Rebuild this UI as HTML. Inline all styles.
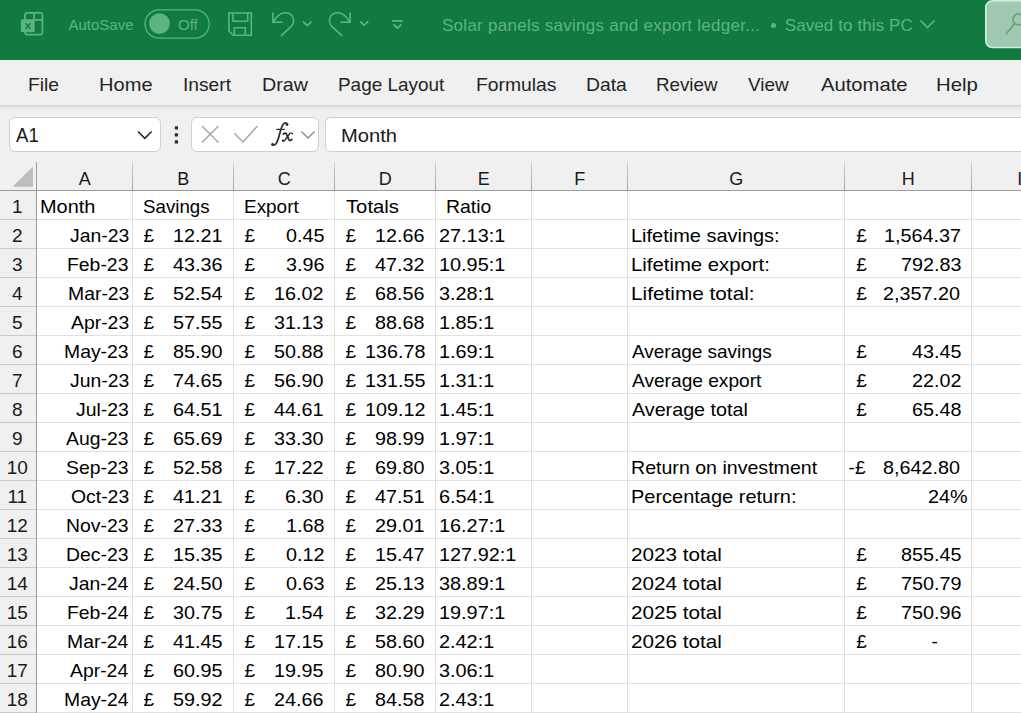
<!DOCTYPE html>
<html><head><meta charset="utf-8"><style>
*{box-sizing:border-box}
html,body{margin:0;padding:0;width:1021px;height:713px;overflow:hidden;background:#f0f0f0;font-family:"Liberation Sans",sans-serif}
.t{position:absolute;white-space:pre;line-height:1}
.g{position:absolute;background:#e1e1e1}
</style></head><body>

<div style="position:absolute;left:0;top:0;width:1021px;height:60px;background:#117a41"></div>
<svg style="position:absolute;left:0;top:0" width="440" height="60" viewBox="0 0 440 60">
<g fill="none" stroke="#5cb580" stroke-width="1.7">
<rect x="25.1" y="12.8" width="17.3" height="21.8" rx="2.2"/>
<line x1="34" y1="13" x2="34" y2="20"/>
<line x1="34" y1="19.9" x2="42.4" y2="19.9"/>
</g>
<rect x="20.9" y="19.3" width="13.8" height="13" rx="2" fill="#5cb580"/>
<path d="M25.5 23.3 L30.4 29 M30.4 23.3 L25.5 29" stroke="#117a41" stroke-width="1.4" fill="none"/>
<rect x="145" y="9.8" width="64.2" height="28.4" rx="14.2" fill="none" stroke="#5cb580" stroke-width="1.2"/>
<circle cx="159.5" cy="23.6" r="10.4" fill="#5cb580"/>
<g fill="none" stroke="#5cb580" stroke-width="1.6" stroke-linejoin="miter">
<path d="M228.9 13 H251.3 V35.3 H233.2 L228.9 31 Z"/>
<path d="M233 13 V21.3 H247.7 V13"/>
<path d="M234.4 35.2 V27.7 H245.3 V35.2"/>
<path d="M272.9 12.6 V22.2 H282.6"/>
<path d="M273.2 22 C276.5 16.2 281 12.8 285.8 12.8 C290.2 12.8 293.6 16.2 293.6 20.4 C293.6 23 292.6 25 291 26.6 L281 35.8"/>
<path d="M303 21.6 L307.2 25.6 L311.4 21.6" stroke-width="1.7"/>
<path d="M350.1 12.6 V22.2 H340.4"/>
<path d="M349.8 22 C346.5 16.2 342 12.8 337.2 12.8 C332.8 12.8 329.4 16.2 329.4 20.4 C329.4 23 330.4 25 332 26.6 L342.2 35.8"/>
<path d="M360.2 21.4 L364.2 25.4 L368.2 21.4" stroke-width="1.7"/>
<path d="M392 20.9 H402.7" stroke-width="1.8"/>
<path d="M393.5 24.4 L397.4 28.2 L401.3 24.4" stroke-width="1.8"/>
</g>
</svg>
<div class="t" style="left:68.5px;top:17.00px;font-size:15px;color:#5cb580">AutoSave</div>
<div class="t" style="left:178px;top:17.20px;font-size:15px;color:#5cb580">Off</div>
<div class="t" style="left:442px;top:17.21px;font-size:17px;letter-spacing:0.27px;color:#5cb580">Solar panels savings and export ledger...</div>
<div style="position:absolute;left:770.5px;top:22.5px;width:5px;height:5px;border-radius:50%;background:#5cb580"></div>
<div class="t" style="left:784.7px;top:17.21px;font-size:17px;letter-spacing:0.1px;color:#5cb580">Saved to this PC</div>
<svg style="position:absolute;left:900px;top:0" width="121" height="60" viewBox="900 0 121 60">
<path d="M920.5 20.5 L927.5 27.5 L934.5 20.5" fill="none" stroke="#5cb580" stroke-width="1.6"/>
<rect x="985.8" y="0.9" width="60" height="46.6" rx="6.5" fill="#a0c7af" stroke="#c8eed5" stroke-width="1.6"/>
<circle cx="1018.5" cy="19.5" r="5.6" fill="none" stroke="#5fa97f" stroke-width="1.8"/>
<path d="M1014.3 23.8 L1006 34.2" stroke="#5fa97f" stroke-width="1.8" fill="none"/>
</svg>
<div style="position:absolute;left:0;top:60px;width:1021px;height:45px;background:#f0f0f0"></div>
<div style="position:absolute;left:0;top:105px;width:1021px;height:6px;background:linear-gradient(#d2d2d2,#e6e6e6 40%,#eeeeee)"></div>
<div class="t" style="left:27.59px;top:74.82px;font-size:19px;color:#242424;transform:scaleX(1.0103);transform-origin:0 0">File</div>
<div class="t" style="left:98.64px;top:74.82px;font-size:19px;color:#242424;transform:scaleX(1.0571);transform-origin:0 0">Home</div>
<div class="t" style="left:182.68px;top:74.82px;font-size:19px;color:#242424;transform:scaleX(1.0109);transform-origin:0 0">Insert</div>
<div class="t" style="left:262.47px;top:74.82px;font-size:19px;color:#242424;transform:scaleX(1.0349);transform-origin:0 0">Draw</div>
<div class="t" style="left:338.00px;top:74.82px;font-size:19px;color:#242424;transform:scaleX(0.9962);transform-origin:0 0">Page Layout</div>
<div class="t" style="left:476.48px;top:74.82px;font-size:19px;color:#242424;transform:scaleX(1.0167);transform-origin:0 0">Formulas</div>
<div class="t" style="left:585.98px;top:74.82px;font-size:19px;color:#242424;transform:scaleX(1.0154);transform-origin:0 0">Data</div>
<div class="t" style="left:656.31px;top:74.82px;font-size:19px;color:#242424;transform:scaleX(0.9869);transform-origin:0 0">Review</div>
<div class="t" style="left:748.20px;top:74.82px;font-size:19px;color:#242424;transform:scaleX(0.9951);transform-origin:0 0">View</div>
<div class="t" style="left:820.70px;top:74.82px;font-size:19px;color:#242424;transform:scaleX(1.0642);transform-origin:0 0">Automate</div>
<div class="t" style="left:936.43px;top:74.82px;font-size:19px;color:#242424;transform:scaleX(1.0730);transform-origin:0 0">Help</div>
<div style="position:absolute;left:9px;top:117px;width:152px;height:35px;background:#fff;border:1px solid #cfcfcf;border-radius:6px"></div>
<div class="t" style="left:15.8px;top:125.37px;font-size:20px;color:#1a1a1a;transform:scaleX(0.93);transform-origin:0 0">A1</div>
<svg style="position:absolute;left:0;top:110px" width="330" height="50" viewBox="0 110 330 50">
<path d="M138 131.5 L144.8 138.3 L151.6 131.5" fill="none" stroke="#2a2a2a" stroke-width="1.6"/>
<rect x="174.8" y="126.3" width="3.2" height="3.2" fill="#2a2a2a"/>
<rect x="174.8" y="133.3" width="3.2" height="3.2" fill="#2a2a2a"/>
<rect x="174.8" y="140.3" width="3.2" height="3.2" fill="#2a2a2a"/>
</svg>
<div style="position:absolute;left:191px;top:117px;width:128px;height:35px;background:#fff;border:1px solid #cfcfcf;border-radius:6px"></div>
<div style="position:absolute;left:325px;top:117px;width:720px;height:35px;background:#fff;border:1px solid #cfcfcf;border-radius:6px"></div>
<svg style="position:absolute;left:180px;top:110px" width="150" height="50" viewBox="180 110 150 50">
<path d="M202 126 L218.5 142.5 M218.5 126 L202 142.5" stroke="#a6a6a6" stroke-width="1.5" fill="none"/>
<path d="M234.5 133.5 L243 142 L257.5 126" stroke="#a6a6a6" stroke-width="1.5" fill="none"/>
<path d="M301.5 131.5 L308 138 L314.5 131.5" stroke="#8a8a8a" stroke-width="1.4" fill="none"/>
</svg>
<svg style="position:absolute;left:260px;top:115px" width="40" height="40" viewBox="260 115 40 40">
<g fill="none" stroke="#2e2e2e" stroke-linecap="round">
<path d="M287.3 124.6 C287 122.6 284.6 122.4 283.2 124.2 C281.6 126.2 280.6 130 279.6 134 C278.6 138 277.8 141.6 276 143.8 C274.8 145.3 273.2 145.5 272.3 144.6" stroke-width="1.8"/>
<path d="M276.8 129.4 H284.2" stroke-width="1.4"/>
<path d="M283.4 134 C284.6 132.8 286 132.9 286.7 134.6 L288.8 139.6 C289.4 140.9 290.7 140.7 291.8 139.4" stroke-width="1.8"/>
<path d="M292.5 133.8 C291.5 132.8 290.3 133 289.5 134 L285 140 C284.2 141 283.3 141.3 282.6 140.8" stroke-width="1.3"/>
</g>
<circle cx="287" cy="124.6" r="1.4" fill="#2e2e2e"/>
<circle cx="272.6" cy="144.4" r="1.4" fill="#2e2e2e"/>
<circle cx="282.9" cy="140.7" r="1.1" fill="#2e2e2e"/>
</svg>
<div class="t" style="left:340.6px;top:126.32px;font-size:19px;color:#1a1a1a;transform:scaleX(1.06);transform-origin:0 0">Month</div>
<div style="position:absolute;left:37px;top:191px;width:984px;height:522px;background:#fff"></div>
<div style="position:absolute;left:0;top:162px;width:1021px;height:28px;background:#f0f0f0"></div>
<div style="position:absolute;left:0;top:190px;width:36px;height:523px;background:#f0f0f0"></div>
<div class="g" style="left:37px;top:219px;width:984px;height:1px"></div>
<div style="position:absolute;left:0;top:219px;width:36px;height:1px;background:#c8c8c8"></div>
<div class="g" style="left:37px;top:248px;width:984px;height:1px"></div>
<div style="position:absolute;left:0;top:248px;width:36px;height:1px;background:#c8c8c8"></div>
<div class="g" style="left:37px;top:277px;width:984px;height:1px"></div>
<div style="position:absolute;left:0;top:277px;width:36px;height:1px;background:#c8c8c8"></div>
<div class="g" style="left:37px;top:306px;width:984px;height:1px"></div>
<div style="position:absolute;left:0;top:306px;width:36px;height:1px;background:#c8c8c8"></div>
<div class="g" style="left:37px;top:335px;width:984px;height:1px"></div>
<div style="position:absolute;left:0;top:335px;width:36px;height:1px;background:#c8c8c8"></div>
<div class="g" style="left:37px;top:364px;width:984px;height:1px"></div>
<div style="position:absolute;left:0;top:364px;width:36px;height:1px;background:#c8c8c8"></div>
<div class="g" style="left:37px;top:393px;width:984px;height:1px"></div>
<div style="position:absolute;left:0;top:393px;width:36px;height:1px;background:#c8c8c8"></div>
<div class="g" style="left:37px;top:422px;width:984px;height:1px"></div>
<div style="position:absolute;left:0;top:422px;width:36px;height:1px;background:#c8c8c8"></div>
<div class="g" style="left:37px;top:451px;width:984px;height:1px"></div>
<div style="position:absolute;left:0;top:451px;width:36px;height:1px;background:#c8c8c8"></div>
<div class="g" style="left:37px;top:480px;width:984px;height:1px"></div>
<div style="position:absolute;left:0;top:480px;width:36px;height:1px;background:#c8c8c8"></div>
<div class="g" style="left:37px;top:509px;width:984px;height:1px"></div>
<div style="position:absolute;left:0;top:509px;width:36px;height:1px;background:#c8c8c8"></div>
<div class="g" style="left:37px;top:538px;width:984px;height:1px"></div>
<div style="position:absolute;left:0;top:538px;width:36px;height:1px;background:#c8c8c8"></div>
<div class="g" style="left:37px;top:567px;width:984px;height:1px"></div>
<div style="position:absolute;left:0;top:567px;width:36px;height:1px;background:#c8c8c8"></div>
<div class="g" style="left:37px;top:596px;width:984px;height:1px"></div>
<div style="position:absolute;left:0;top:596px;width:36px;height:1px;background:#c8c8c8"></div>
<div class="g" style="left:37px;top:625px;width:984px;height:1px"></div>
<div style="position:absolute;left:0;top:625px;width:36px;height:1px;background:#c8c8c8"></div>
<div class="g" style="left:37px;top:654px;width:984px;height:1px"></div>
<div style="position:absolute;left:0;top:654px;width:36px;height:1px;background:#c8c8c8"></div>
<div class="g" style="left:37px;top:683px;width:984px;height:1px"></div>
<div style="position:absolute;left:0;top:683px;width:36px;height:1px;background:#c8c8c8"></div>
<div class="g" style="left:37px;top:712px;width:984px;height:1px"></div>
<div style="position:absolute;left:0;top:712px;width:36px;height:1px;background:#c8c8c8"></div>
<div class="g" style="left:132px;top:191px;width:1px;height:522px"></div>
<div style="position:absolute;left:132px;top:162px;width:1px;height:28px;background:linear-gradient(#d4d4d4,#b4b4b4 60%,#a8a8a8)"></div>
<div class="g" style="left:233px;top:191px;width:1px;height:522px"></div>
<div style="position:absolute;left:233px;top:162px;width:1px;height:28px;background:linear-gradient(#d4d4d4,#b4b4b4 60%,#a8a8a8)"></div>
<div class="g" style="left:334px;top:191px;width:1px;height:522px"></div>
<div style="position:absolute;left:334px;top:162px;width:1px;height:28px;background:linear-gradient(#d4d4d4,#b4b4b4 60%,#a8a8a8)"></div>
<div class="g" style="left:435px;top:191px;width:1px;height:522px"></div>
<div style="position:absolute;left:435px;top:162px;width:1px;height:28px;background:linear-gradient(#d4d4d4,#b4b4b4 60%,#a8a8a8)"></div>
<div class="g" style="left:531px;top:191px;width:1px;height:522px"></div>
<div style="position:absolute;left:531px;top:162px;width:1px;height:28px;background:linear-gradient(#d4d4d4,#b4b4b4 60%,#a8a8a8)"></div>
<div class="g" style="left:627px;top:191px;width:1px;height:522px"></div>
<div style="position:absolute;left:627px;top:162px;width:1px;height:28px;background:linear-gradient(#d4d4d4,#b4b4b4 60%,#a8a8a8)"></div>
<div class="g" style="left:844px;top:191px;width:1px;height:522px"></div>
<div style="position:absolute;left:844px;top:162px;width:1px;height:28px;background:linear-gradient(#d4d4d4,#b4b4b4 60%,#a8a8a8)"></div>
<div class="g" style="left:971px;top:191px;width:1px;height:522px"></div>
<div style="position:absolute;left:971px;top:162px;width:1px;height:28px;background:linear-gradient(#d4d4d4,#b4b4b4 60%,#a8a8a8)"></div>
<div style="position:absolute;left:0;top:190px;width:1021px;height:1px;background:#9c9c9c"></div>
<div style="position:absolute;left:36px;top:162px;width:1px;height:551px;background:#9c9c9c"></div>
<svg style="position:absolute;left:0;top:160px" width="36" height="30" viewBox="0 160 36 30"><path d="M33 166.5 V186.8 H12.6 Z" fill="#bdbdbd"/></svg>
<div class="t" style="left:36.8px;width:96px;text-align:center;top:169.66px;font-size:18px;color:#1a1a1a">A</div>
<div class="t" style="left:132.8px;width:101px;text-align:center;top:169.66px;font-size:18px;color:#1a1a1a">B</div>
<div class="t" style="left:233.8px;width:101px;text-align:center;top:169.66px;font-size:18px;color:#1a1a1a">C</div>
<div class="t" style="left:334.8px;width:101px;text-align:center;top:169.66px;font-size:18px;color:#1a1a1a">D</div>
<div class="t" style="left:435.8px;width:96px;text-align:center;top:169.66px;font-size:18px;color:#1a1a1a">E</div>
<div class="t" style="left:531.8px;width:96px;text-align:center;top:169.66px;font-size:18px;color:#1a1a1a">F</div>
<div class="t" style="left:627.8px;width:217px;text-align:center;top:169.66px;font-size:18px;color:#1a1a1a">G</div>
<div class="t" style="left:844.8px;width:127px;text-align:center;top:169.66px;font-size:18px;color:#1a1a1a">H</div>
<div class="t" style="left:1017.2px;top:169.66px;font-size:18px;color:#1a1a1a">I</div>
<div class="t" style="left:-0.7px;width:36px;text-align:center;top:196.92px;font-size:19px;color:#1a1a1a">1</div>
<div class="t" style="left:-0.7px;width:36px;text-align:center;top:225.92px;font-size:19px;color:#1a1a1a">2</div>
<div class="t" style="left:-0.7px;width:36px;text-align:center;top:254.92px;font-size:19px;color:#1a1a1a">3</div>
<div class="t" style="left:-0.7px;width:36px;text-align:center;top:283.92px;font-size:19px;color:#1a1a1a">4</div>
<div class="t" style="left:-0.7px;width:36px;text-align:center;top:312.92px;font-size:19px;color:#1a1a1a">5</div>
<div class="t" style="left:-0.7px;width:36px;text-align:center;top:341.92px;font-size:19px;color:#1a1a1a">6</div>
<div class="t" style="left:-0.7px;width:36px;text-align:center;top:370.92px;font-size:19px;color:#1a1a1a">7</div>
<div class="t" style="left:-0.7px;width:36px;text-align:center;top:399.92px;font-size:19px;color:#1a1a1a">8</div>
<div class="t" style="left:-0.7px;width:36px;text-align:center;top:428.92px;font-size:19px;color:#1a1a1a">9</div>
<div class="t" style="left:-0.7px;width:36px;text-align:center;top:457.92px;font-size:19px;color:#1a1a1a">10</div>
<div class="t" style="left:-0.7px;width:36px;text-align:center;top:486.92px;font-size:19px;color:#1a1a1a">11</div>
<div class="t" style="left:-0.7px;width:36px;text-align:center;top:515.92px;font-size:19px;color:#1a1a1a">12</div>
<div class="t" style="left:-0.7px;width:36px;text-align:center;top:544.92px;font-size:19px;color:#1a1a1a">13</div>
<div class="t" style="left:-0.7px;width:36px;text-align:center;top:573.92px;font-size:19px;color:#1a1a1a">14</div>
<div class="t" style="left:-0.7px;width:36px;text-align:center;top:602.92px;font-size:19px;color:#1a1a1a">15</div>
<div class="t" style="left:-0.7px;width:36px;text-align:center;top:631.92px;font-size:19px;color:#1a1a1a">16</div>
<div class="t" style="left:-0.7px;width:36px;text-align:center;top:660.92px;font-size:19px;color:#1a1a1a">17</div>
<div class="t" style="left:-0.7px;width:36px;text-align:center;top:689.92px;font-size:19px;color:#1a1a1a">18</div>
<div class="t" style="left:40.25px;top:197.42px;font-size:19px;color:#000;transform:scaleX(1.0490);transform-origin:0 0">Month</div>
<div class="t" style="left:142.82px;top:197.42px;font-size:19px;color:#000;transform:scaleX(0.9848);transform-origin:0 0">Savings</div>
<div class="t" style="left:244.20px;top:197.42px;font-size:19px;color:#000;transform:scaleX(0.9963);transform-origin:0 0">Export</div>
<div class="t" style="left:346.10px;top:197.42px;font-size:19px;color:#000;transform:scaleX(1.0653);transform-origin:0 0">Totals</div>
<div class="t" style="left:446.18px;top:197.42px;font-size:19px;color:#000;transform:scaleX(1.0209);transform-origin:0 0">Ratio</div>
<div class="t" style="left:70.26px;top:226.42px;font-size:19px;color:#000;transform:scaleX(1.0200);transform-origin:0 0">Jan-23</div>
<div class="t" style="left:143.60px;top:226.42px;font-size:19px;color:#000;transform:scaleX(1.0000);transform-origin:0 0">£</div>
<div class="t" style="left:173.22px;top:226.42px;font-size:19px;color:#000;transform:scaleX(1.0400);transform-origin:0 0">12.21</div>
<div class="t" style="left:244.60px;top:226.42px;font-size:19px;color:#000;transform:scaleX(1.0000);transform-origin:0 0">£</div>
<div class="t" style="left:285.66px;top:226.42px;font-size:19px;color:#000;transform:scaleX(1.0400);transform-origin:0 0">0.45</div>
<div class="t" style="left:345.60px;top:226.42px;font-size:19px;color:#000;transform:scaleX(1.0000);transform-origin:0 0">£</div>
<div class="t" style="left:375.22px;top:226.42px;font-size:19px;color:#000;transform:scaleX(1.0400);transform-origin:0 0">12.66</div>
<div class="t" style="left:438.85px;top:226.42px;font-size:19px;color:#000;transform:scaleX(1.0450);transform-origin:0 0">27.13:1</div>
<div class="t" style="left:630.95px;top:226.42px;font-size:19px;color:#000;transform:scaleX(1.0504);transform-origin:0 0">Lifetime savings:</div>
<div class="t" style="left:856.20px;top:226.42px;font-size:19px;color:#000;transform:scaleX(1.0000);transform-origin:0 0">£</div>
<div class="t" style="left:884.48px;top:226.42px;font-size:19px;color:#000;transform:scaleX(1.0400);transform-origin:0 0">1,564.37</div>
<div class="t" style="left:67.20px;top:255.42px;font-size:19px;color:#000;transform:scaleX(1.0200);transform-origin:0 0">Feb-23</div>
<div class="t" style="left:143.60px;top:255.42px;font-size:19px;color:#000;transform:scaleX(1.0000);transform-origin:0 0">£</div>
<div class="t" style="left:173.22px;top:255.42px;font-size:19px;color:#000;transform:scaleX(1.0400);transform-origin:0 0">43.36</div>
<div class="t" style="left:244.60px;top:255.42px;font-size:19px;color:#000;transform:scaleX(1.0000);transform-origin:0 0">£</div>
<div class="t" style="left:285.66px;top:255.42px;font-size:19px;color:#000;transform:scaleX(1.0400);transform-origin:0 0">3.96</div>
<div class="t" style="left:345.60px;top:255.42px;font-size:19px;color:#000;transform:scaleX(1.0000);transform-origin:0 0">£</div>
<div class="t" style="left:375.22px;top:255.42px;font-size:19px;color:#000;transform:scaleX(1.0400);transform-origin:0 0">47.32</div>
<div class="t" style="left:438.85px;top:255.42px;font-size:19px;color:#000;transform:scaleX(1.0450);transform-origin:0 0">10.95:1</div>
<div class="t" style="left:630.93px;top:255.42px;font-size:19px;color:#000;transform:scaleX(1.0693);transform-origin:0 0">Lifetime export:</div>
<div class="t" style="left:856.20px;top:255.42px;font-size:19px;color:#000;transform:scaleX(1.0000);transform-origin:0 0">£</div>
<div class="t" style="left:901.12px;top:255.42px;font-size:19px;color:#000;transform:scaleX(1.0400);transform-origin:0 0">792.83</div>
<div class="t" style="left:68.22px;top:284.42px;font-size:19px;color:#000;transform:scaleX(1.0200);transform-origin:0 0">Mar-23</div>
<div class="t" style="left:143.60px;top:284.42px;font-size:19px;color:#000;transform:scaleX(1.0000);transform-origin:0 0">£</div>
<div class="t" style="left:173.22px;top:284.42px;font-size:19px;color:#000;transform:scaleX(1.0400);transform-origin:0 0">52.54</div>
<div class="t" style="left:244.60px;top:284.42px;font-size:19px;color:#000;transform:scaleX(1.0000);transform-origin:0 0">£</div>
<div class="t" style="left:274.22px;top:284.42px;font-size:19px;color:#000;transform:scaleX(1.0400);transform-origin:0 0">16.02</div>
<div class="t" style="left:345.60px;top:284.42px;font-size:19px;color:#000;transform:scaleX(1.0000);transform-origin:0 0">£</div>
<div class="t" style="left:375.22px;top:284.42px;font-size:19px;color:#000;transform:scaleX(1.0400);transform-origin:0 0">68.56</div>
<div class="t" style="left:438.85px;top:284.42px;font-size:19px;color:#000;transform:scaleX(1.0450);transform-origin:0 0">3.28:1</div>
<div class="t" style="left:630.91px;top:284.42px;font-size:19px;color:#000;transform:scaleX(1.0937);transform-origin:0 0">Lifetime total:</div>
<div class="t" style="left:856.20px;top:284.42px;font-size:19px;color:#000;transform:scaleX(1.0000);transform-origin:0 0">£</div>
<div class="t" style="left:883.44px;top:284.42px;font-size:19px;color:#000;transform:scaleX(1.0400);transform-origin:0 0">2,357.20</div>
<div class="t" style="left:71.28px;top:313.42px;font-size:19px;color:#000;transform:scaleX(1.0200);transform-origin:0 0">Apr-23</div>
<div class="t" style="left:143.60px;top:313.42px;font-size:19px;color:#000;transform:scaleX(1.0000);transform-origin:0 0">£</div>
<div class="t" style="left:173.22px;top:313.42px;font-size:19px;color:#000;transform:scaleX(1.0400);transform-origin:0 0">57.55</div>
<div class="t" style="left:244.60px;top:313.42px;font-size:19px;color:#000;transform:scaleX(1.0000);transform-origin:0 0">£</div>
<div class="t" style="left:274.22px;top:313.42px;font-size:19px;color:#000;transform:scaleX(1.0400);transform-origin:0 0">31.13</div>
<div class="t" style="left:345.60px;top:313.42px;font-size:19px;color:#000;transform:scaleX(1.0000);transform-origin:0 0">£</div>
<div class="t" style="left:375.22px;top:313.42px;font-size:19px;color:#000;transform:scaleX(1.0400);transform-origin:0 0">88.68</div>
<div class="t" style="left:438.85px;top:313.42px;font-size:19px;color:#000;transform:scaleX(1.0450);transform-origin:0 0">1.85:1</div>
<div class="t" style="left:64.14px;top:342.42px;font-size:19px;color:#000;transform:scaleX(1.0200);transform-origin:0 0">May-23</div>
<div class="t" style="left:143.60px;top:342.42px;font-size:19px;color:#000;transform:scaleX(1.0000);transform-origin:0 0">£</div>
<div class="t" style="left:173.22px;top:342.42px;font-size:19px;color:#000;transform:scaleX(1.0400);transform-origin:0 0">85.90</div>
<div class="t" style="left:244.60px;top:342.42px;font-size:19px;color:#000;transform:scaleX(1.0000);transform-origin:0 0">£</div>
<div class="t" style="left:274.22px;top:342.42px;font-size:19px;color:#000;transform:scaleX(1.0400);transform-origin:0 0">50.88</div>
<div class="t" style="left:345.60px;top:342.42px;font-size:19px;color:#000;transform:scaleX(1.0000);transform-origin:0 0">£</div>
<div class="t" style="left:364.82px;top:342.42px;font-size:19px;color:#000;transform:scaleX(1.0400);transform-origin:0 0">136.78</div>
<div class="t" style="left:438.85px;top:342.42px;font-size:19px;color:#000;transform:scaleX(1.0450);transform-origin:0 0">1.69:1</div>
<div class="t" style="left:632.00px;top:342.42px;font-size:19px;color:#000;transform:scaleX(0.9979);transform-origin:0 0">Average savings</div>
<div class="t" style="left:856.20px;top:342.42px;font-size:19px;color:#000;transform:scaleX(1.0000);transform-origin:0 0">£</div>
<div class="t" style="left:911.52px;top:342.42px;font-size:19px;color:#000;transform:scaleX(1.0400);transform-origin:0 0">43.45</div>
<div class="t" style="left:70.26px;top:371.42px;font-size:19px;color:#000;transform:scaleX(1.0200);transform-origin:0 0">Jun-23</div>
<div class="t" style="left:143.60px;top:371.42px;font-size:19px;color:#000;transform:scaleX(1.0000);transform-origin:0 0">£</div>
<div class="t" style="left:173.22px;top:371.42px;font-size:19px;color:#000;transform:scaleX(1.0400);transform-origin:0 0">74.65</div>
<div class="t" style="left:244.60px;top:371.42px;font-size:19px;color:#000;transform:scaleX(1.0000);transform-origin:0 0">£</div>
<div class="t" style="left:274.22px;top:371.42px;font-size:19px;color:#000;transform:scaleX(1.0400);transform-origin:0 0">56.90</div>
<div class="t" style="left:345.60px;top:371.42px;font-size:19px;color:#000;transform:scaleX(1.0000);transform-origin:0 0">£</div>
<div class="t" style="left:364.82px;top:371.42px;font-size:19px;color:#000;transform:scaleX(1.0400);transform-origin:0 0">131.55</div>
<div class="t" style="left:438.85px;top:371.42px;font-size:19px;color:#000;transform:scaleX(1.0450);transform-origin:0 0">1.31:1</div>
<div class="t" style="left:632.00px;top:371.42px;font-size:19px;color:#000;transform:scaleX(1.0070);transform-origin:0 0">Average export</div>
<div class="t" style="left:856.20px;top:371.42px;font-size:19px;color:#000;transform:scaleX(1.0000);transform-origin:0 0">£</div>
<div class="t" style="left:911.52px;top:371.42px;font-size:19px;color:#000;transform:scaleX(1.0400);transform-origin:0 0">22.02</div>
<div class="t" style="left:76.38px;top:400.42px;font-size:19px;color:#000;transform:scaleX(1.0200);transform-origin:0 0">Jul-23</div>
<div class="t" style="left:143.60px;top:400.42px;font-size:19px;color:#000;transform:scaleX(1.0000);transform-origin:0 0">£</div>
<div class="t" style="left:173.22px;top:400.42px;font-size:19px;color:#000;transform:scaleX(1.0400);transform-origin:0 0">64.51</div>
<div class="t" style="left:244.60px;top:400.42px;font-size:19px;color:#000;transform:scaleX(1.0000);transform-origin:0 0">£</div>
<div class="t" style="left:274.22px;top:400.42px;font-size:19px;color:#000;transform:scaleX(1.0400);transform-origin:0 0">44.61</div>
<div class="t" style="left:345.60px;top:400.42px;font-size:19px;color:#000;transform:scaleX(1.0000);transform-origin:0 0">£</div>
<div class="t" style="left:364.82px;top:400.42px;font-size:19px;color:#000;transform:scaleX(1.0400);transform-origin:0 0">109.12</div>
<div class="t" style="left:438.85px;top:400.42px;font-size:19px;color:#000;transform:scaleX(1.0450);transform-origin:0 0">1.45:1</div>
<div class="t" style="left:632.00px;top:400.42px;font-size:19px;color:#000;transform:scaleX(1.0378);transform-origin:0 0">Average total</div>
<div class="t" style="left:856.20px;top:400.42px;font-size:19px;color:#000;transform:scaleX(1.0000);transform-origin:0 0">£</div>
<div class="t" style="left:911.52px;top:400.42px;font-size:19px;color:#000;transform:scaleX(1.0400);transform-origin:0 0">65.48</div>
<div class="t" style="left:66.18px;top:429.42px;font-size:19px;color:#000;transform:scaleX(1.0200);transform-origin:0 0">Aug-23</div>
<div class="t" style="left:143.60px;top:429.42px;font-size:19px;color:#000;transform:scaleX(1.0000);transform-origin:0 0">£</div>
<div class="t" style="left:173.22px;top:429.42px;font-size:19px;color:#000;transform:scaleX(1.0400);transform-origin:0 0">65.69</div>
<div class="t" style="left:244.60px;top:429.42px;font-size:19px;color:#000;transform:scaleX(1.0000);transform-origin:0 0">£</div>
<div class="t" style="left:274.22px;top:429.42px;font-size:19px;color:#000;transform:scaleX(1.0400);transform-origin:0 0">33.30</div>
<div class="t" style="left:345.60px;top:429.42px;font-size:19px;color:#000;transform:scaleX(1.0000);transform-origin:0 0">£</div>
<div class="t" style="left:375.22px;top:429.42px;font-size:19px;color:#000;transform:scaleX(1.0400);transform-origin:0 0">98.99</div>
<div class="t" style="left:438.85px;top:429.42px;font-size:19px;color:#000;transform:scaleX(1.0450);transform-origin:0 0">1.97:1</div>
<div class="t" style="left:66.18px;top:458.42px;font-size:19px;color:#000;transform:scaleX(1.0200);transform-origin:0 0">Sep-23</div>
<div class="t" style="left:143.60px;top:458.42px;font-size:19px;color:#000;transform:scaleX(1.0000);transform-origin:0 0">£</div>
<div class="t" style="left:173.22px;top:458.42px;font-size:19px;color:#000;transform:scaleX(1.0400);transform-origin:0 0">52.58</div>
<div class="t" style="left:244.60px;top:458.42px;font-size:19px;color:#000;transform:scaleX(1.0000);transform-origin:0 0">£</div>
<div class="t" style="left:274.22px;top:458.42px;font-size:19px;color:#000;transform:scaleX(1.0400);transform-origin:0 0">17.22</div>
<div class="t" style="left:345.60px;top:458.42px;font-size:19px;color:#000;transform:scaleX(1.0000);transform-origin:0 0">£</div>
<div class="t" style="left:375.22px;top:458.42px;font-size:19px;color:#000;transform:scaleX(1.0400);transform-origin:0 0">69.80</div>
<div class="t" style="left:438.85px;top:458.42px;font-size:19px;color:#000;transform:scaleX(1.0450);transform-origin:0 0">3.05:1</div>
<div class="t" style="left:630.97px;top:458.42px;font-size:19px;color:#000;transform:scaleX(1.0306);transform-origin:0 0">Return on investment</div>
<div class="t" style="left:848.60px;top:458.42px;font-size:19px;color:#000;transform:scaleX(1.0000);transform-origin:0 0">-£</div>
<div class="t" style="left:883.44px;top:458.42px;font-size:19px;color:#000;transform:scaleX(1.0400);transform-origin:0 0">8,642.80</div>
<div class="t" style="left:71.28px;top:487.42px;font-size:19px;color:#000;transform:scaleX(1.0200);transform-origin:0 0">Oct-23</div>
<div class="t" style="left:143.60px;top:487.42px;font-size:19px;color:#000;transform:scaleX(1.0000);transform-origin:0 0">£</div>
<div class="t" style="left:173.22px;top:487.42px;font-size:19px;color:#000;transform:scaleX(1.0400);transform-origin:0 0">41.21</div>
<div class="t" style="left:244.60px;top:487.42px;font-size:19px;color:#000;transform:scaleX(1.0000);transform-origin:0 0">£</div>
<div class="t" style="left:284.62px;top:487.42px;font-size:19px;color:#000;transform:scaleX(1.0400);transform-origin:0 0">6.30</div>
<div class="t" style="left:345.60px;top:487.42px;font-size:19px;color:#000;transform:scaleX(1.0000);transform-origin:0 0">£</div>
<div class="t" style="left:375.22px;top:487.42px;font-size:19px;color:#000;transform:scaleX(1.0400);transform-origin:0 0">47.51</div>
<div class="t" style="left:438.85px;top:487.42px;font-size:19px;color:#000;transform:scaleX(1.0450);transform-origin:0 0">6.54:1</div>
<div class="t" style="left:630.95px;top:487.42px;font-size:19px;color:#000;transform:scaleX(1.0516);transform-origin:0 0">Percentage return:</div>
<div class="t" style="left:928.08px;top:487.42px;font-size:19px;color:#000;transform:scaleX(1.0400);transform-origin:0 0">24%</div>
<div class="t" style="left:66.18px;top:516.42px;font-size:19px;color:#000;transform:scaleX(1.0200);transform-origin:0 0">Nov-23</div>
<div class="t" style="left:143.60px;top:516.42px;font-size:19px;color:#000;transform:scaleX(1.0000);transform-origin:0 0">£</div>
<div class="t" style="left:173.22px;top:516.42px;font-size:19px;color:#000;transform:scaleX(1.0400);transform-origin:0 0">27.33</div>
<div class="t" style="left:244.60px;top:516.42px;font-size:19px;color:#000;transform:scaleX(1.0000);transform-origin:0 0">£</div>
<div class="t" style="left:285.66px;top:516.42px;font-size:19px;color:#000;transform:scaleX(1.0400);transform-origin:0 0">1.68</div>
<div class="t" style="left:345.60px;top:516.42px;font-size:19px;color:#000;transform:scaleX(1.0000);transform-origin:0 0">£</div>
<div class="t" style="left:375.22px;top:516.42px;font-size:19px;color:#000;transform:scaleX(1.0400);transform-origin:0 0">29.01</div>
<div class="t" style="left:438.85px;top:516.42px;font-size:19px;color:#000;transform:scaleX(1.0450);transform-origin:0 0">16.27:1</div>
<div class="t" style="left:66.18px;top:545.42px;font-size:19px;color:#000;transform:scaleX(1.0200);transform-origin:0 0">Dec-23</div>
<div class="t" style="left:143.60px;top:545.42px;font-size:19px;color:#000;transform:scaleX(1.0000);transform-origin:0 0">£</div>
<div class="t" style="left:173.22px;top:545.42px;font-size:19px;color:#000;transform:scaleX(1.0400);transform-origin:0 0">15.35</div>
<div class="t" style="left:244.60px;top:545.42px;font-size:19px;color:#000;transform:scaleX(1.0000);transform-origin:0 0">£</div>
<div class="t" style="left:285.66px;top:545.42px;font-size:19px;color:#000;transform:scaleX(1.0400);transform-origin:0 0">0.12</div>
<div class="t" style="left:345.60px;top:545.42px;font-size:19px;color:#000;transform:scaleX(1.0000);transform-origin:0 0">£</div>
<div class="t" style="left:375.22px;top:545.42px;font-size:19px;color:#000;transform:scaleX(1.0400);transform-origin:0 0">15.47</div>
<div class="t" style="left:438.85px;top:545.42px;font-size:19px;color:#000;transform:scaleX(1.0450);transform-origin:0 0">127.92:1</div>
<div class="t" style="left:630.91px;top:545.42px;font-size:19px;color:#000;transform:scaleX(1.0889);transform-origin:0 0">2023 total</div>
<div class="t" style="left:856.20px;top:545.42px;font-size:19px;color:#000;transform:scaleX(1.0000);transform-origin:0 0">£</div>
<div class="t" style="left:901.12px;top:545.42px;font-size:19px;color:#000;transform:scaleX(1.0400);transform-origin:0 0">855.45</div>
<div class="t" style="left:69.24px;top:574.42px;font-size:19px;color:#000;transform:scaleX(1.0200);transform-origin:0 0">Jan-24</div>
<div class="t" style="left:143.60px;top:574.42px;font-size:19px;color:#000;transform:scaleX(1.0000);transform-origin:0 0">£</div>
<div class="t" style="left:173.22px;top:574.42px;font-size:19px;color:#000;transform:scaleX(1.0400);transform-origin:0 0">24.50</div>
<div class="t" style="left:244.60px;top:574.42px;font-size:19px;color:#000;transform:scaleX(1.0000);transform-origin:0 0">£</div>
<div class="t" style="left:285.66px;top:574.42px;font-size:19px;color:#000;transform:scaleX(1.0400);transform-origin:0 0">0.63</div>
<div class="t" style="left:345.60px;top:574.42px;font-size:19px;color:#000;transform:scaleX(1.0000);transform-origin:0 0">£</div>
<div class="t" style="left:375.22px;top:574.42px;font-size:19px;color:#000;transform:scaleX(1.0400);transform-origin:0 0">25.13</div>
<div class="t" style="left:438.85px;top:574.42px;font-size:19px;color:#000;transform:scaleX(1.0450);transform-origin:0 0">38.89:1</div>
<div class="t" style="left:630.91px;top:574.42px;font-size:19px;color:#000;transform:scaleX(1.0889);transform-origin:0 0">2024 total</div>
<div class="t" style="left:856.20px;top:574.42px;font-size:19px;color:#000;transform:scaleX(1.0000);transform-origin:0 0">£</div>
<div class="t" style="left:901.12px;top:574.42px;font-size:19px;color:#000;transform:scaleX(1.0400);transform-origin:0 0">750.79</div>
<div class="t" style="left:67.20px;top:603.42px;font-size:19px;color:#000;transform:scaleX(1.0200);transform-origin:0 0">Feb-24</div>
<div class="t" style="left:143.60px;top:603.42px;font-size:19px;color:#000;transform:scaleX(1.0000);transform-origin:0 0">£</div>
<div class="t" style="left:173.22px;top:603.42px;font-size:19px;color:#000;transform:scaleX(1.0400);transform-origin:0 0">30.75</div>
<div class="t" style="left:244.60px;top:603.42px;font-size:19px;color:#000;transform:scaleX(1.0000);transform-origin:0 0">£</div>
<div class="t" style="left:284.62px;top:603.42px;font-size:19px;color:#000;transform:scaleX(1.0400);transform-origin:0 0">1.54</div>
<div class="t" style="left:345.60px;top:603.42px;font-size:19px;color:#000;transform:scaleX(1.0000);transform-origin:0 0">£</div>
<div class="t" style="left:375.22px;top:603.42px;font-size:19px;color:#000;transform:scaleX(1.0400);transform-origin:0 0">32.29</div>
<div class="t" style="left:438.85px;top:603.42px;font-size:19px;color:#000;transform:scaleX(1.0450);transform-origin:0 0">19.97:1</div>
<div class="t" style="left:630.91px;top:603.42px;font-size:19px;color:#000;transform:scaleX(1.0889);transform-origin:0 0">2025 total</div>
<div class="t" style="left:856.20px;top:603.42px;font-size:19px;color:#000;transform:scaleX(1.0000);transform-origin:0 0">£</div>
<div class="t" style="left:901.12px;top:603.42px;font-size:19px;color:#000;transform:scaleX(1.0400);transform-origin:0 0">750.96</div>
<div class="t" style="left:67.20px;top:632.42px;font-size:19px;color:#000;transform:scaleX(1.0200);transform-origin:0 0">Mar-24</div>
<div class="t" style="left:143.60px;top:632.42px;font-size:19px;color:#000;transform:scaleX(1.0000);transform-origin:0 0">£</div>
<div class="t" style="left:173.22px;top:632.42px;font-size:19px;color:#000;transform:scaleX(1.0400);transform-origin:0 0">41.45</div>
<div class="t" style="left:244.60px;top:632.42px;font-size:19px;color:#000;transform:scaleX(1.0000);transform-origin:0 0">£</div>
<div class="t" style="left:274.22px;top:632.42px;font-size:19px;color:#000;transform:scaleX(1.0400);transform-origin:0 0">17.15</div>
<div class="t" style="left:345.60px;top:632.42px;font-size:19px;color:#000;transform:scaleX(1.0000);transform-origin:0 0">£</div>
<div class="t" style="left:375.22px;top:632.42px;font-size:19px;color:#000;transform:scaleX(1.0400);transform-origin:0 0">58.60</div>
<div class="t" style="left:438.85px;top:632.42px;font-size:19px;color:#000;transform:scaleX(1.0450);transform-origin:0 0">2.42:1</div>
<div class="t" style="left:630.91px;top:632.42px;font-size:19px;color:#000;transform:scaleX(1.0889);transform-origin:0 0">2026 total</div>
<div class="t" style="left:856.20px;top:632.42px;font-size:19px;color:#000;transform:scaleX(1.0000);transform-origin:0 0">£</div>
<div class="t" style="left:931.50px;top:632.42px;font-size:19px;color:#000;transform:scaleX(1.0000);transform-origin:0 0">-</div>
<div class="t" style="left:70.26px;top:661.42px;font-size:19px;color:#000;transform:scaleX(1.0200);transform-origin:0 0">Apr-24</div>
<div class="t" style="left:143.60px;top:661.42px;font-size:19px;color:#000;transform:scaleX(1.0000);transform-origin:0 0">£</div>
<div class="t" style="left:173.22px;top:661.42px;font-size:19px;color:#000;transform:scaleX(1.0400);transform-origin:0 0">60.95</div>
<div class="t" style="left:244.60px;top:661.42px;font-size:19px;color:#000;transform:scaleX(1.0000);transform-origin:0 0">£</div>
<div class="t" style="left:274.22px;top:661.42px;font-size:19px;color:#000;transform:scaleX(1.0400);transform-origin:0 0">19.95</div>
<div class="t" style="left:345.60px;top:661.42px;font-size:19px;color:#000;transform:scaleX(1.0000);transform-origin:0 0">£</div>
<div class="t" style="left:375.22px;top:661.42px;font-size:19px;color:#000;transform:scaleX(1.0400);transform-origin:0 0">80.90</div>
<div class="t" style="left:438.85px;top:661.42px;font-size:19px;color:#000;transform:scaleX(1.0450);transform-origin:0 0">3.06:1</div>
<div class="t" style="left:64.14px;top:690.42px;font-size:19px;color:#000;transform:scaleX(1.0200);transform-origin:0 0">May-24</div>
<div class="t" style="left:143.60px;top:690.42px;font-size:19px;color:#000;transform:scaleX(1.0000);transform-origin:0 0">£</div>
<div class="t" style="left:173.22px;top:690.42px;font-size:19px;color:#000;transform:scaleX(1.0400);transform-origin:0 0">59.92</div>
<div class="t" style="left:244.60px;top:690.42px;font-size:19px;color:#000;transform:scaleX(1.0000);transform-origin:0 0">£</div>
<div class="t" style="left:274.22px;top:690.42px;font-size:19px;color:#000;transform:scaleX(1.0400);transform-origin:0 0">24.66</div>
<div class="t" style="left:345.60px;top:690.42px;font-size:19px;color:#000;transform:scaleX(1.0000);transform-origin:0 0">£</div>
<div class="t" style="left:375.22px;top:690.42px;font-size:19px;color:#000;transform:scaleX(1.0400);transform-origin:0 0">84.58</div>
<div class="t" style="left:438.85px;top:690.42px;font-size:19px;color:#000;transform:scaleX(1.0450);transform-origin:0 0">2.43:1</div>
</body></html>
